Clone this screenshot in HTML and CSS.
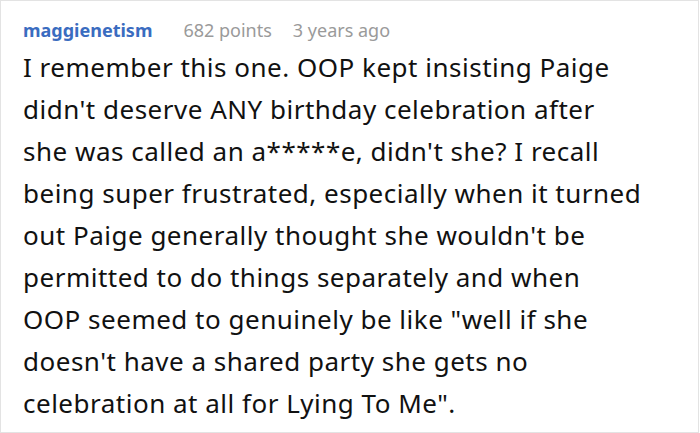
FILE: index.html
```html
<!DOCTYPE html>
<html>
<head>
<meta charset="utf-8">
<link rel="stylesheet" href="styles.css">
</head>
<body>
<div class="comment">
  <div class="meta">
    <span class="author">maggienetism</span>
    <span class="info">682 points</span>
    <span class="info">3 years ago</span>
  </div>
  <p class="text">I remember this one. OOP kept insisting Paige<br>didn't deserve ANY birthday celebration after<br>she was called an a*****e, didn't she? I recall<br>being super frustrated, especially when it turned<br>out Paige generally thought she wouldn't be<br>permitted to do things separately and when<br>OOP seemed to genuinely be like "well if she<br>doesn't have a shared party she gets no<br>celebration at all for Lying To Me".</p>
</div>
</body>
</html>
```
FILE: styles.css
```css
html, body {
  margin: 0;
  padding: 0;
  background: #fff;
}
.comment {
  width: 699px;
  height: 433px;
  box-sizing: border-box;
  border: 1px solid #e3e3e3;
  padding: 17px 8px 0 22px;
  font-family: "Noto Sans", "Open Sans", sans-serif;
}
.meta {
  display: flex;
  align-items: baseline;
  gap: 21px;
  height: 24px;
  line-height: 24px;
  margin-bottom: 3.5px;
}
.author {
  font-weight: 700;
  font-size: 18px;
  color: #3a6cc0;
  margin-right: 10px;
}
.info {
  font-size: 18px;
  color: #9a9a9a;
}
.text {
  margin: 0;
  font-size: 26px;
  line-height: 42.1px;
  letter-spacing: 0.5px;
  white-space: nowrap;
  color: #111;
}
```
